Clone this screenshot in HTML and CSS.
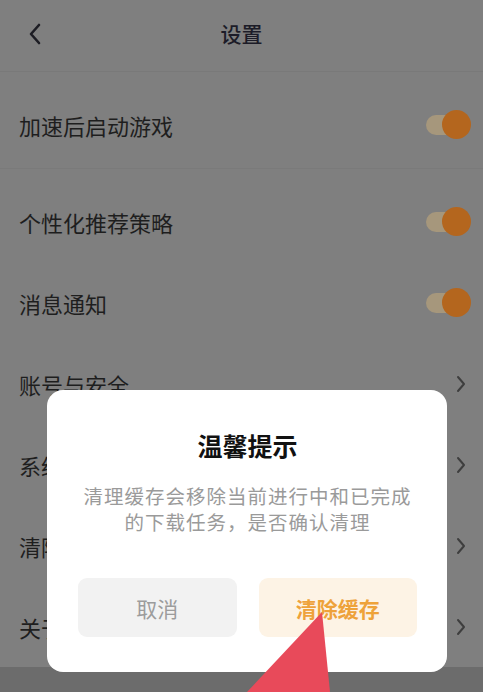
FILE: index.html
```html
<!DOCTYPE html>
<html lang="zh-CN">
<head>
    <meta charset="UTF-8">
    <meta name="viewport" content="width=device-width, initial-scale=1.0">
    <title>设置</title>
    <link rel="stylesheet" href="styles.css">
</head>
<body>

<div class="page">
    <div class="header">
        <svg class="back" width="16" height="24" viewBox="0 0 16 24">
            <path d="M12 3 L4 12 L12 21" fill="none" stroke="#1d1d24" stroke-width="2.6" stroke-linecap="round" stroke-linejoin="round"/>
        </svg>
        <div class="title">设置</div>
    </div>

    <div class="group first">
        <div class="row">
            <span>加速后启动游戏</span>
            <div class="switch"><div class="knob"></div></div>
        </div>
    </div>

    <div class="group">
        <div class="row">
            <span>个性化推荐策略</span>
            <div class="switch"><div class="knob"></div></div>
        </div>
        <div class="row">
            <span>消息通知</span>
            <div class="switch"><div class="knob"></div></div>
        </div>
        <div class="row">
            <span>账号与安全</span>
            <svg class="chevron" width="12" height="20" viewBox="0 0 12 20"><path d="M3 3 L9 10 L3 17" fill="none" stroke="#3e3e3e" stroke-width="2" stroke-linecap="round" stroke-linejoin="round"/></svg>
        </div>
        <div class="row">
            <span>系统设置</span>
            <svg class="chevron" width="12" height="20" viewBox="0 0 12 20"><path d="M3 3 L9 10 L3 17" fill="none" stroke="#3e3e3e" stroke-width="2" stroke-linecap="round" stroke-linejoin="round"/></svg>
        </div>
        <div class="row">
            <span>清除缓存</span>
            <svg class="chevron" width="12" height="20" viewBox="0 0 12 20"><path d="M3 3 L9 10 L3 17" fill="none" stroke="#3e3e3e" stroke-width="2" stroke-linecap="round" stroke-linejoin="round"/></svg>
        </div>
        <div class="row">
            <span>关于我们</span>
            <svg class="chevron" width="12" height="20" viewBox="0 0 12 20"><path d="M3 3 L9 10 L3 17" fill="none" stroke="#3e3e3e" stroke-width="2" stroke-linecap="round" stroke-linejoin="round"/></svg>
        </div>
    </div>
</div>

<div class="dialog">
    <div class="dialog-title">温馨提示</div>
    <div class="dialog-text">
        <div>清理缓存会移除当前进行中和已完成</div>
        <div>的下载任务，是否确认清理</div>
    </div>
    <div class="dialog-buttons">
        <button class="btn cancel">取消</button>
        <button class="btn confirm">清除缓存</button>
    </div>
</div>

<svg class="pointer" width="483" height="692" viewBox="0 0 483 692">
    <polygon points="322,612 247,692 330,692" fill="#e84a5a"/>
</svg>

</body>
</html>
```

FILE: styles.css
```css
body {
    margin: 0;
    font-family: "Noto Sans CJK SC", "Noto Sans", sans-serif;
    background-color: #6c6c6c;
    width: 483px;
    height: 692px;
    overflow: hidden;
    position: relative;
}
.page {
    background-color: #7f7f7f;
}
.header {
    height: 71px;
    display: flex;
    align-items: center;
    justify-content: center;
    position: relative;
    border-bottom: 1px solid #797979;
}
.back {
    position: absolute;
    left: 27px;
    top: 22px;
}
.title {
    font-size: 21px;
    font-weight: 500;
    color: #1c1c28;
    margin-top: -6px;
}
.group.first {
    padding-top: 13px;
    padding-bottom: 3px;
    border-bottom: 1px solid #7a7a7a;
}
.group {
    padding-top: 12px;
}
.row {
    height: 81px;
    display: flex;
    align-items: center;
    justify-content: space-between;
    padding: 0 13px 0 19px;
    font-size: 22px;
    color: #1e1e1e;
}
.group.first .row {
    height: 80px;
}
.switch {
    width: 44px;
    height: 20px;
    background-color: #a6977c;
    border-radius: 10px;
    position: relative;
}
.knob {
    position: absolute;
    right: -1px;
    top: -5px;
    width: 29px;
    height: 29px;
    border-radius: 50%;
    background-color: #b4661e;
}
.chevron {
    margin-right: 3px;
}
.dialog {
    position: absolute;
    left: 47px;
    top: 390px;
    width: 400px;
    height: 282px;
    box-sizing: border-box;
    background-color: #fff;
    border-radius: 16px;
    padding: 37px 30px 0 31px;
    display: flex;
    flex-direction: column;
    align-items: center;
}
.dialog-title {
    font-size: 25px;
    font-weight: bold;
    color: #111;
    line-height: 36px;
}
.dialog-text {
    margin-top: 20px;
    font-size: 19.5px;
    letter-spacing: 1px;
    line-height: 26px;
    color: #9a9a9a;
    text-align: center;
}
.dialog-buttons {
    margin-top: 43px;
    display: flex;
    gap: 22px;
    width: 100%;
}
.btn {
    flex: 1;
    height: 59px;
    border: none;
    border-radius: 9px;
    font-family: "Noto Sans CJK SC", "Noto Sans", sans-serif;
    font-size: 21px;
}
.cancel {
    background-color: #f2f2f2;
    color: #9c9c9c;
}
.confirm {
    background-color: #fdf3e5;
    color: #eea23a;
    font-weight: bold;
}
.pointer {
    position: absolute;
    left: 0;
    top: 0;
}
```
